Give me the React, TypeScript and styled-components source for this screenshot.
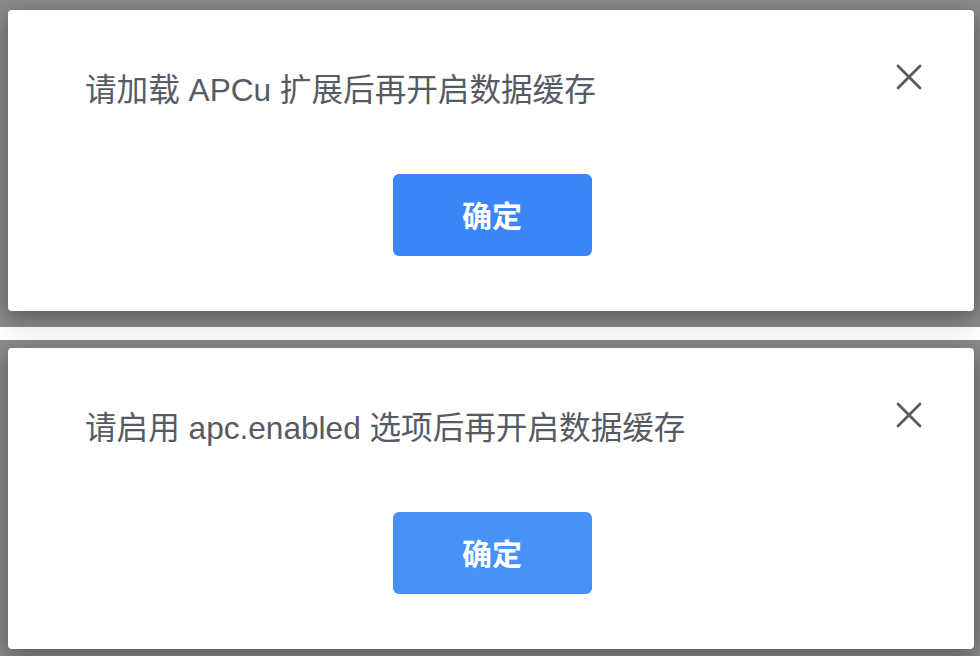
import React from "react";
import styled, { createGlobalStyle } from "styled-components";

const GlobalStyle = createGlobalStyle`
  html, body {
    margin: 0;
    padding: 0;
    background: #ffffff;
    font-family: "Liberation Sans", "Noto Sans CJK SC", sans-serif;
  }
`;

interface IAlert {
  message: string;
  top: number;
  pressed?: boolean;
}

const CloseIcon = () => (
  <svg width="26" height="26" viewBox="0 0 26 26" fill="none">
    <path
      d="M2 2L24 24M24 2L2 24"
      stroke="#555a63"
      strokeWidth="2.8"
      strokeLinecap="round"
    />
  </svg>
);

const AlertScreen: React.FC<IAlert> = ({ message, top, pressed }) => {
  return (
    <Mask $top={top}>
      <Dialog>
        <CloseButton aria-label="close">
          <CloseIcon />
        </CloseButton>
        <Message>{message}</Message>
        <Footer>
          <ConfirmButton $pressed={pressed}>确定</ConfirmButton>
        </Footer>
      </Dialog>
    </Mask>
  );
};

export default function App() {
  return (
    <>
      <GlobalStyle />
      <Page>
        <AlertScreen message="请加载 APCu 扩展后再开启数据缓存" top={10} />
        <AlertScreen
          message="请启用 apc.enabled 选项后再开启数据缓存"
          top={8}
          pressed
        />
      </Page>
    </>
  );
}

const Page = styled.div`
  width: 980px;
  height: 656px;
  overflow: hidden;
  display: flex;
  flex-direction: column;
  gap: 13px;
`;

const Mask = styled.div<{ $top: number }>`
  flex-shrink: 0;
  background-color: #8a8a8a;
  padding: ${(p) => p.$top}px 6px 16px 8px;
`;

const Dialog = styled.div`
  position: relative;
  background-color: #ffffff;
  border-radius: 4px;
  height: 301px;
  box-sizing: border-box;
  padding: 60px 70px 0 77px;
  box-shadow: 0 6px 22px rgba(0, 0, 0, 0.38);
`;

const CloseButton = styled.button`
  position: absolute;
  top: 54px;
  right: 52px;
  padding: 0;
  border: none;
  background: none;
  cursor: pointer;
  display: flex;
`;

const Message = styled.p`
  margin: 0;
  font-size: 31.6px;
  line-height: 40px;
  color: #565a62;
`;

const Footer = styled.div`
  display: flex;
  justify-content: center;
  margin-top: 64px;
  padding-left: 1px;
  padding-right: 6px;
`;

const ConfirmButton = styled.button<{ $pressed?: boolean }>`
  width: 199px;
  height: 82px;
  border: none;
  border-radius: 6px;
  background-color: ${(p) => (p.$pressed ? "#4891f7" : "#3a86f6")};
  color: #ffffff;
  font-family: "Liberation Sans", "Noto Sans CJK SC", sans-serif;
  font-size: 30px;
  font-weight: 700;
  padding-bottom: 4px;
  cursor: pointer;
`;
